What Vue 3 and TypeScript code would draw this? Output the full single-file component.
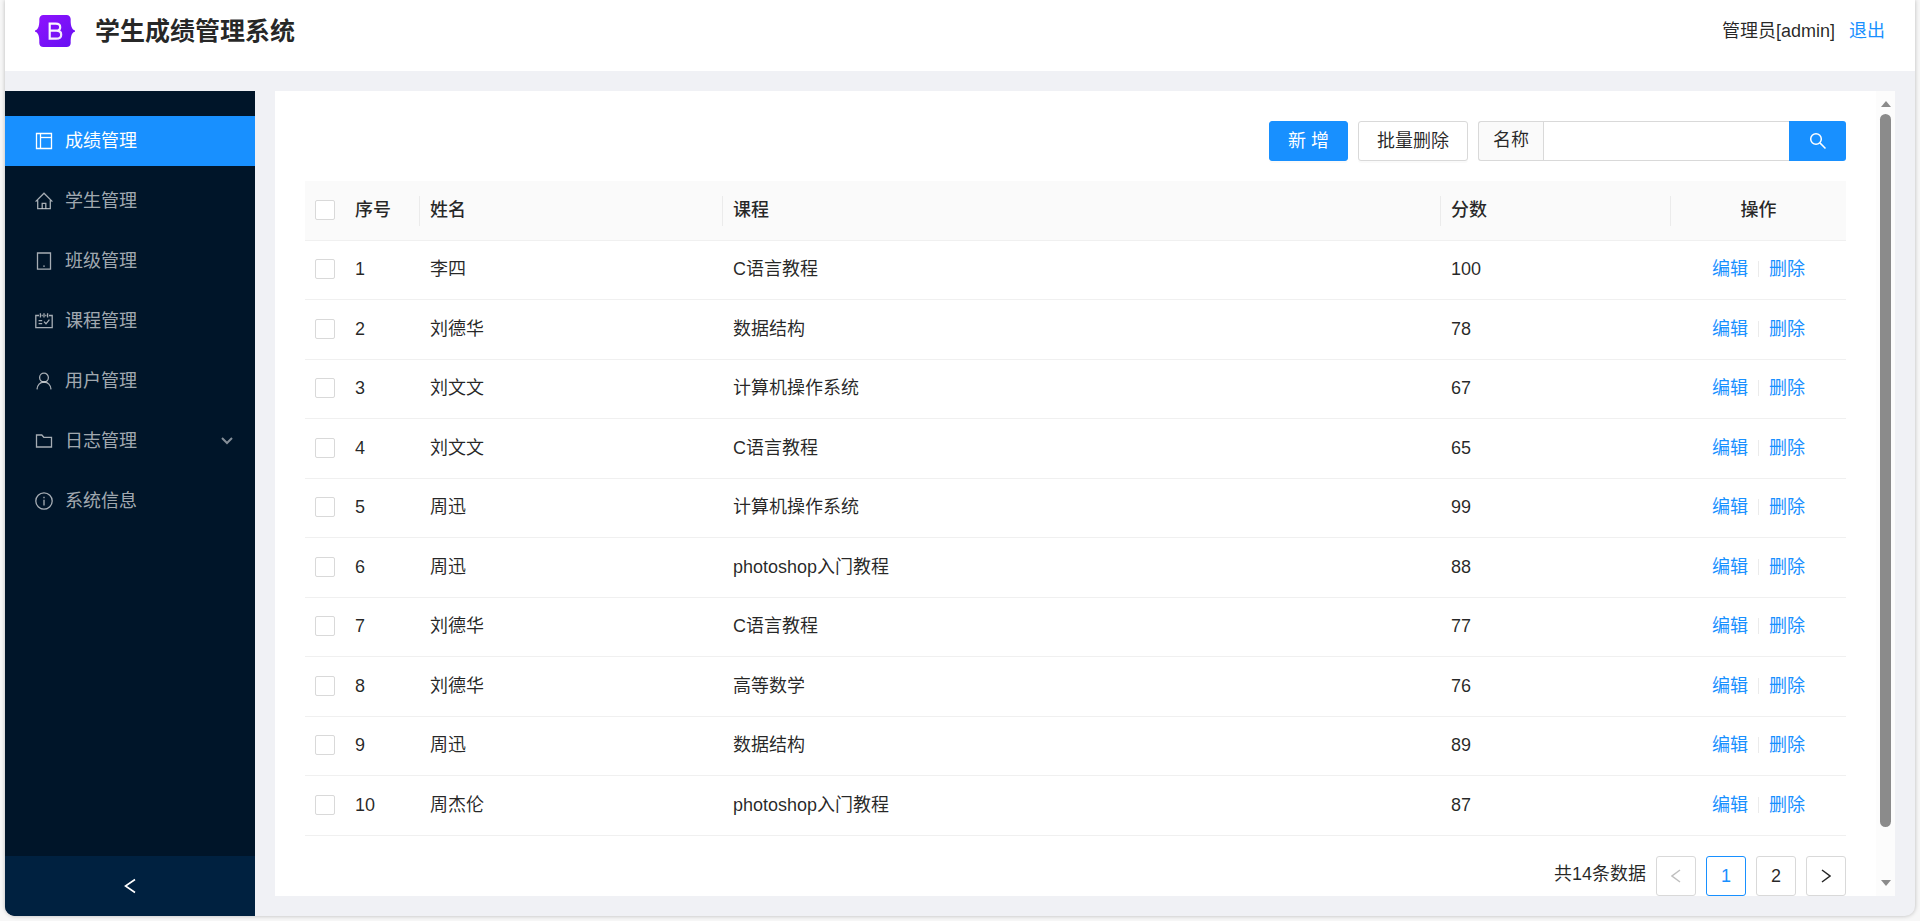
<script setup lang="ts">
import { ref } from 'vue'

interface MenuItem {
  label: string
  paths: string[]
  submenu?: boolean
}

interface Score {
  id: number
  name: string
  course: string
  score: number
}

const menu: MenuItem[] = [
  { label: '成绩管理', paths: ['M1.500 1.500h15v15h-15z', 'M5.500 1.500v15', 'M5.500 5.500h11'] },
  { label: '学生管理', paths: ['M.6 9.600 9 1.200l8.400 8.400', 'M2.700 8.200v8.400h12.600V8.200', 'M7.200 16.400v-5h3.600v5'] },
  { label: '班级管理', paths: ['M2.500 1h13v16.200h-13z', 'M8.200 14.200h1.600'] },
  { label: '课程管理', paths: ['M4 3.500H.8v12.200h16.400V3.500H14', 'M5.400 1.200v4.300M9 1.200v4.300M12.600 1.200v4.300M6.600 3.500h1.200M10.200 3.500h1.200', 'M3.600 8.700h3.600M3.600 11.700h3.600', 'm9 9.600 2 2.200 3.400-4.200'] },
  { label: '用户管理', paths: ['M9 1.200a4.400 4.400 0 1 1 0 8.800 4.400 4.400 0 0 1 0-8.800z', 'M2 17.400c.2-4.200 3-7.400 7-7.400s6.800 3.200 7 7.400'] },
  { label: '日志管理', paths: ['M1.500 3h5.300l2 2.300h7.700v9.700h-15z'], submenu: true },
  { label: '系统信息', paths: ['M9 .8a8.200 8.200 0 1 1 0 16.400A8.200 8.200 0 0 1 9 .8z', 'M9 7.800v5.600M9 4.800v1.500'] },
]

const scores: Score[] = [
  { id: 1, name: '李四', course: 'C语言教程', score: 100 },
  { id: 2, name: '刘德华', course: '数据结构', score: 78 },
  { id: 3, name: '刘文文', course: '计算机操作系统', score: 67 },
  { id: 4, name: '刘文文', course: 'C语言教程', score: 65 },
  { id: 5, name: '周迅', course: '计算机操作系统', score: 99 },
  { id: 6, name: '周迅', course: 'photoshop入门教程', score: 88 },
  { id: 7, name: '刘德华', course: 'C语言教程', score: 77 },
  { id: 8, name: '刘德华', course: '高等数学', score: 76 },
  { id: 9, name: '周迅', course: '数据结构', score: 89 },
  { id: 10, name: '周杰伦', course: 'photoshop入门教程', score: 87 },
]

const active = ref(0)
const page = ref(1)
const keyword = ref('')
const selected = ref<number[]>([])

function toggleAll(event: Event) {
  const checked = (event.target as HTMLInputElement).checked
  selected.value = checked ? scores.map((s) => s.id) : []
}
</script>

<template>
  <div class="app">
    <header class="header">
      <svg class="logo" viewBox="0 0 40 32" aria-hidden="true">
        <defs>
          <linearGradient id="logo-fill" x1="0" y1="0" x2="1" y2="1">
            <stop offset="0" stop-color="#9013fe" />
            <stop offset="1" stop-color="#6610f2" />
          </linearGradient>
          <linearGradient id="logo-mark" x1="0" y1="0" x2="1" y2="1">
            <stop offset="0" stop-color="#ffffff" />
            <stop offset="1" stop-color="#f1e5fc" />
          </linearGradient>
        </defs>
        <path fill="url(#logo-fill)" d="M8.400 0C6 0 4.200 2 4.300 4.300c.1 2.200 0 5-.7 7.300C2.900 13.900 1.700 15.300 0 15.500v1.200c1.700.2 2.900 1.600 3.600 3.900.7 2.300.8 5.100.7 7.300C4.200 30.100 6 32 8.400 32h23.200c2.400 0 4.200-1.900 4.100-4.100-.1-2.200 0-5 .7-7.300.7-2.300 1.900-3.700 3.600-3.900v-1.200c-1.700-.2-2.900-1.600-3.600-3.900-.7-2.300-.8-5.100-.7-7.300C35.800 2 34 0 31.600 0z" />
        <path fill="none" stroke="url(#logo-mark)" stroke-width="2.200" d="M14.700 8.700h6c2.800 0 4.500 1.400 4.500 3.500s-1.600 3.500-4 3.500h-6.500zM14.700 15.700h6.600c3 0 4.900 1.500 4.900 4s-1.800 4-5 4h-6.500z" />
      </svg>
      <h1>学生成绩管理系统</h1>
      <div class="account">
        <span>管理员[admin]</span>
        <a href="#">退出</a>
      </div>
    </header>

    <div class="body">
      <aside class="sider">
        <nav class="menu">
          <a
            v-for="(item, i) in menu"
            :key="item.label"
            href="#"
            :class="{ active: active === i }"
            @click.prevent="active = i"
          >
            <svg class="menu-icon" viewBox="0 0 18 18" aria-hidden="true">
              <path v-for="d in item.paths" :key="d" :d="d" />
            </svg>
            <span>{{ item.label }}</span>
            <svg v-if="item.submenu" class="arrow" viewBox="0 0 12 8" aria-hidden="true">
              <path d="m1 1 5 5 5-5" />
            </svg>
          </a>
        </nav>
        <button class="trigger" type="button" aria-label="收起菜单">
          <svg viewBox="0 0 12 16" aria-hidden="true"><path d="M11 1.500 1.500 8l9.500 6.500" /></svg>
        </button>
      </aside>

      <main class="content">
        <div class="panel">
          <div class="toolbar">
            <button class="btn primary" type="button">新 增</button>
            <button class="btn" type="button">批量删除</button>
            <form class="search" @submit.prevent>
              <label for="keyword">名称</label>
              <input id="keyword" v-model="keyword" type="text" />
              <button type="submit" aria-label="搜索">
                <svg viewBox="0 0 18 18" aria-hidden="true">
                  <circle cx="7" cy="7" r="5.300" />
                  <path d="m10.900 10.900 5.600 5.600" />
                </svg>
              </button>
            </form>
          </div>

          <table>
            <colgroup>
              <col class="c-check" /><col class="c-no" /><col class="c-name" />
              <col class="c-course" /><col class="c-score" /><col class="c-action" />
            </colgroup>
            <thead>
              <tr>
                <th class="check">
                  <input
                    type="checkbox"
                    aria-label="全选"
                    :checked="selected.length === scores.length"
                    @change="toggleAll"
                  />
                </th>
                <th class="split">序号</th>
                <th class="split">姓名</th>
                <th class="split">课程</th>
                <th class="split">分数</th>
                <th class="action">操作</th>
              </tr>
            </thead>
            <tbody>
              <tr v-for="row in scores" :key="row.id">
                <td class="check">
                  <input v-model="selected" type="checkbox" :value="row.id" :aria-label="row.name" />
                </td>
                <td>{{ row.id }}</td>
                <td>{{ row.name }}</td>
                <td>{{ row.course }}</td>
                <td>{{ row.score }}</td>
                <td class="action">
                  <div class="links">
                    <a href="#">编辑</a>
                    <i class="divider"></i>
                    <a href="#">删除</a>
                  </div>
                </td>
              </tr>
            </tbody>
          </table>

          <div class="pagination">
            <span class="total">共14条数据</span>
            <button type="button" disabled aria-label="上一页">
              <svg viewBox="0 0 10 14" aria-hidden="true"><path d="M9 1 1 7l8 6" /></svg>
            </button>
            <button
              v-for="n in 2"
              :key="n"
              type="button"
              :class="{ current: page === n }"
              @click="page = n"
            >{{ n }}</button>
            <button type="button" aria-label="下一页">
              <svg viewBox="0 0 10 14" aria-hidden="true"><path d="m1 1 8 6-8 6" /></svg>
            </button>
          </div>
        </div>

        <div class="scrollbar" aria-hidden="true">
          <svg viewBox="0 0 10 6"><path d="M5 0l5 6H0z" /></svg>
          <div class="track"><div class="thumb"></div></div>
          <svg viewBox="0 0 10 6"><path d="M0 0h10L5 6z" /></svg>
        </div>
      </main>
    </div>
  </div>
</template>

<style>
body {
  background: #f7f7f7;
}
</style>

<style scoped>
* {
  box-sizing: border-box;
}

.app {
  display: flex;
  flex-direction: column;
  min-height: calc(100vh - 5px);
  margin: 0 5px 5px;
  overflow: hidden;
  border-radius: 0 0 10px 10px;
  background: #f0f1f5;
  box-shadow: 0 0 4px rgba(0, 0, 0, 0.25);
  color: rgba(0, 0, 0, 0.85);
  font-family: "Liberation Sans", "Noto Sans CJK SC", sans-serif;
  font-size: 18px;
  line-height: 28px;
}

a {
  color: #1890ff;
  text-decoration: none;
}

button,
input {
  margin: 0;
  font: inherit;
  color: inherit;
}

button {
  cursor: pointer;
}

svg {
  display: block;
  fill: none;
  stroke: currentColor;
}

.header {
  display: flex;
  flex: none;
  align-items: center;
  height: 71px;
  padding: 0 30px 9px;
  background: #fff;
}

.logo {
  width: 40px;
  height: 32px;
  stroke: none;
}

h1 {
  margin: 0 0 0 20px;
  font-size: 25px;
  font-weight: 700;
  line-height: 40px;
}

.account {
  display: flex;
  gap: 14px;
  margin-left: auto;
}

.body {
  display: flex;
  flex: 1;
  gap: 20px;
  padding-top: 20px;
}

.sider {
  display: flex;
  flex: none;
  flex-direction: column;
  width: 250px;
  background: #001529;
}

.menu {
  display: flex;
  flex: 1;
  flex-direction: column;
  gap: 10px;
  padding-top: 25px;
}

.menu a {
  display: flex;
  align-items: center;
  height: 50px;
  padding: 0 22px 0 30px;
  color: rgba(255, 255, 255, 0.65);
}

.menu a.active {
  background: #1890ff;
  color: #fff;
}

.menu-icon {
  width: 18px;
  height: 18px;
  margin-right: 12px;
  stroke-width: 1.3;
}

.arrow {
  width: 12px;
  height: 8px;
  margin-left: auto;
  stroke-width: 2;
  opacity: 0.8;
}

.trigger {
  display: flex;
  align-items: center;
  justify-content: center;
  height: 60px;
  border: 0;
  background: #002140;
  color: #fff;
}

.trigger svg {
  width: 12px;
  height: 16px;
  stroke-width: 1.6;
}

.content {
  display: flex;
  flex: 1;
  min-width: 0;
  margin: 0 20px 20px 0;
  background: #fff;
}

.panel {
  flex: 1;
  min-width: 0;
  padding: 30px 30px 0;
}

.toolbar {
  display: flex;
  justify-content: flex-end;
  gap: 10px;
  margin-bottom: 20px;
}

.btn {
  height: 40px;
  padding: 0 18px;
  border: 1px solid #d9d9d9;
  border-radius: 3px;
  background: #fff;
  box-shadow: 0 2px 0 rgba(0, 0, 0, 0.02);
}

.btn.primary {
  border-color: #1890ff;
  background: #1890ff;
  color: #fff;
}

.search {
  display: flex;
  width: 368px;
  height: 40px;
}

.search label {
  flex: none;
  padding: 4px 14px;
  border: 1px solid #d9d9d9;
  border-right: 0;
  border-radius: 3px 0 0 3px;
  background: #fafafa;
}

.search input {
  flex: 1;
  min-width: 0;
  padding: 0 14px;
  border: 1px solid #d9d9d9;
  border-right: 0;
  outline: 0;
}

.search button {
  display: flex;
  flex: none;
  align-items: center;
  justify-content: center;
  width: 57px;
  border: 0;
  border-radius: 0 3px 3px 0;
  background: #1890ff;
  color: #fff;
}

.search svg {
  width: 18px;
  height: 18px;
  stroke-width: 1.5;
}

table {
  width: 100%;
  border-collapse: separate;
  border-spacing: 0;
  table-layout: fixed;
}

.c-check {
  width: 40px;
}

.c-no {
  width: 75px;
}

.c-name {
  width: 303px;
}

.c-score {
  width: 230px;
}

.c-action {
  width: 175px;
}

th,
td {
  height: 60px;
  padding: 0 10px 2px;
  border-bottom: 1px solid #f0f0f0;
  text-align: left;
}

tbody tr:nth-child(odd) td {
  height: 59px;
}

th {
  background: #fafafa;
  font-weight: 500;
}

th.split {
  background: linear-gradient(#ebebeb, #ebebeb) right center / 1px 30px no-repeat #fafafa;
}

th.action {
  text-align: center;
}

.check input {
  display: block;
  width: 20px;
  height: 20px;
  border: 1px solid #d9d9d9;
  border-radius: 2px;
  background: #fff;
  appearance: none;
}

.check input:checked {
  border-color: #1890ff;
  background: #1890ff;
}

.links {
  display: flex;
  align-items: center;
  justify-content: center;
  gap: 10px;
}

.divider {
  width: 1px;
  height: 16px;
  background: #ebebeb;
}

.pagination {
  display: flex;
  justify-content: flex-end;
  gap: 10px;
  margin-top: 20px;
}

.total {
  line-height: 36px;
}

.pagination button {
  display: flex;
  align-items: center;
  justify-content: center;
  width: 40px;
  height: 40px;
  padding: 0;
  border: 1px solid #d9d9d9;
  border-radius: 3px;
  background: #fff;
}

.pagination button.current {
  border-color: #1890ff;
  color: #1890ff;
  font-weight: 500;
}

.pagination button:disabled {
  color: rgba(0, 0, 0, 0.25);
}

.pagination svg {
  width: 10px;
  height: 14px;
  stroke-width: 1.5;
}

.scrollbar {
  display: flex;
  flex: none;
  flex-direction: column;
  align-items: center;
  gap: 7px;
  width: 19px;
  padding: 10px 0;
  background: #fcfcfc;
}

.scrollbar svg {
  width: 10px;
  height: 6px;
  fill: #8b8b8b;
  stroke: none;
}

.track {
  flex: 1;
}

.thumb {
  width: 11px;
  height: 94%;
  border-radius: 6px;
  background: #8b8b8b;
}
</style>
